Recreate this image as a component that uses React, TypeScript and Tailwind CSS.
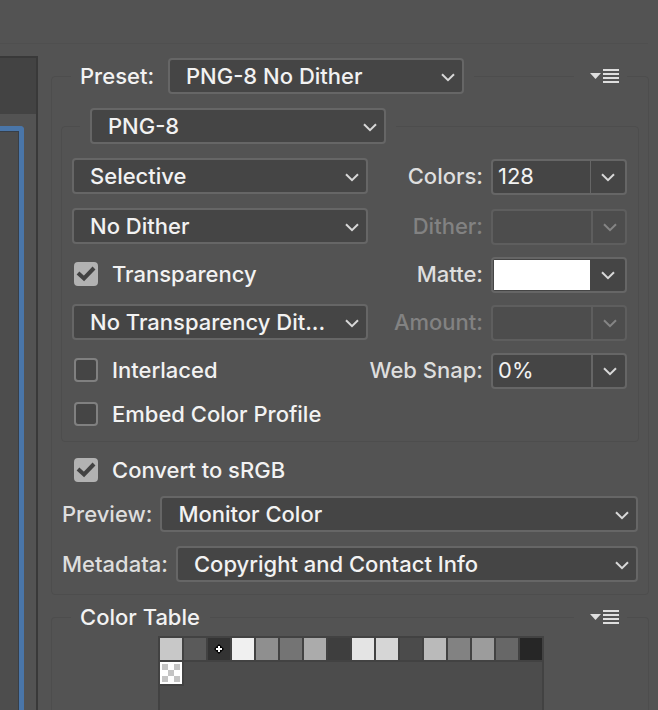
import React from "react";

const FONT = "font-['Inter','Liberation_Sans',sans-serif]";

function Chevron({ className = "" }: { className?: string }) {
  return (
    <svg viewBox="0 0 14 9" className={`h-[9px] w-[14px] shrink-0 ${className}`} fill="none" stroke="currentColor" strokeWidth="2" aria-hidden="true">
      <path d="M1 1.2 L7 7.2 L13 1.2" />
    </svg>
  );
}

function Select({ id, label, value, className = "" }: { id: string; label?: string; value: string; className?: string }) {
  return (
    <div className={`relative h-9 ${className}`}>
      <select
        id={id}
        aria-label={label}
        defaultValue={value}
        className="h-9 w-full appearance-none rounded-[4px] border-2 border-[#666666] bg-[#454545] pr-9 pl-4 text-[#f2f2f2] outline-none"
      >
        <option>{value}</option>
      </select>
      <Chevron className="pointer-events-none absolute top-[15px] right-[9px] text-[#d8d8d8]" />
    </div>
  );
}

function Check({ label, checked = false }: { label: string; checked?: boolean }) {
  return (
    <label className="flex h-9 items-center gap-3.5 pl-0.5 text-[#f2f2f2]">
      <span className="relative size-6">
        <input
          type="checkbox"
          defaultChecked={checked}
          className="peer block size-6 appearance-none rounded-[4px] border-2 border-[#808080] bg-[#454545] checked:border-[#b2b2b2] checked:bg-[#b2b2b2]"
        />
        <svg viewBox="0 0 24 24" className="pointer-events-none absolute inset-0 hidden size-6 text-[#424242] peer-checked:block" fill="none" stroke="currentColor" strokeWidth="4" aria-hidden="true">
          <path d="M4 11 L10 16.5 L20 6" />
        </svg>
      </span>
      {label}
    </label>
  );
}

type ComboProps = {
  id: string;
  label: string;
  value?: string;
  disabled?: boolean;
  swatch?: boolean;
  thin?: boolean;
  className?: string;
};

function Combo({ id, label, value = "", disabled = false, swatch = false, thin = false, className = "" }: ComboProps) {
  return (
    <div className={`flex h-9 items-center justify-end gap-2 ${className}`}>
      <label htmlFor={id} className={`pb-0.5 whitespace-nowrap ${disabled ? "text-[#828282]" : "text-[#dedede]"}`}>
        {label}
      </label>
      <div className={`flex h-9 w-[136px] rounded-[4px] border-2 ${disabled ? "border-[#5e5e5e] bg-[#4d4d4d]" : "border-[#666666] bg-[#454545]"}`}>
        {swatch ? (
          <button id={id} type="button" aria-label="Matte color" className="my-px ml-px min-w-0 flex-1 bg-white" />
        ) : (
          <input id={id} defaultValue={value} disabled={disabled} className="min-w-0 flex-1 bg-transparent pb-0.5 pl-[5px] font-normal text-[#f2f2f2] outline-none" />
        )}
        <button
          type="button"
          disabled={disabled}
          aria-label={`${label} options`}
          className={`flex items-center justify-center ${thin ? "w-[35px] border-l" : "w-[34px] border-l-2 pl-0.5"} ${swatch ? "border-[#454545]" : disabled ? "border-[#5e5e5e]" : "border-[#666666]"} ${disabled ? "text-[#858585]" : "text-[#d8d8d8]"}`}
        >
          <Chevron />
        </button>
      </div>
    </div>
  );
}

function MenuButton({ label }: { label: string }) {
  return (
    <button type="button" aria-label={label} className="bg-[#535353] pr-2 pl-4 text-[#dedede]">
      <svg viewBox="0 0 29 15" className="block h-[15px] w-[29px]" fill="currentColor" shapeRendering="crispEdges" aria-hidden="true">
        <path d="M0 4 H11 L5.5 10 Z" shapeRendering="auto" />
        <path d="M13 0 H29 V2 H13 Z M13 4 H29 V6 H13 Z M13 8 H29 V10 H13 Z M13 12 H29 V14 H13 Z" />
      </svg>
    </button>
  );
}

const SWATCHES = [
  "#c8c8c8", "#5a5a5a", "#333333", "#f0f0f0", "#8f8f8f", "#747474", "#ababab", "#3e3e3e",
  "#e4e4e4", "#d6d6d6", "#4b4b4b", "#bababa", "#828282", "#9c9c9c", "#676767", "#262626",
];

function ColorTable() {
  return (
    <div className="ml-[106px] flex w-[386px] flex-1 flex-col border-2 border-b-0 border-[#424242] bg-[#4c4c4c]">
      <div className="flex gap-0.5 bg-[#424242] pb-0.5">
        {SWATCHES.map((color, i) => (
          <button key={color} type="button" aria-label={color} className="flex size-[22px] items-center justify-center" style={{ backgroundColor: color }}>
            {i === 2 && (
              <svg viewBox="0 0 10 10" className="size-[10px]" aria-hidden="true">
                <path d="M5 0 L10 5 L5 10 L0 5 Z" fill="#000000" />
                <path d="M4 2 H6 V4 H8 V6 H6 V8 H4 V6 H2 V4 H4 Z" fill="#ffffff" />
              </svg>
            )}
          </button>
        ))}
      </div>
      <button type="button" aria-label="Transparent" className="size-6 border-r-2 border-b-2 border-[#424242] bg-white">
        <svg viewBox="0 0 22 22" className="block size-[22px]" fill="#c4c4c4" shapeRendering="crispEdges" aria-hidden="true">
          <path d="M2 2h6v6H2z M14 2h6v6h-6z M8 8h6v6H8z M2 14h6v6H2z M14 14h6v6h-6z" />
        </svg>
      </button>
    </div>
  );
}

function PreviewEdge() {
  return (
    <div className="flex w-[38px] shrink-0 flex-col border-t-2 border-r-2 border-[#393939]">
      <div className="h-14 bg-[#434343]" />
      <div className="mt-3 mr-3 flex-1 rounded-tr-[4px] border-t-[5px] border-r-[5px] border-[#4a76a9]">
        <div className="h-full border-t border-r border-[#383f48] bg-[#4d4d4d]" />
      </div>
    </div>
  );
}

export default function App() {
  return (
    <main className={`flex h-screen min-h-[710px] flex-col overflow-hidden bg-[#535353] text-[22px] leading-7 font-medium ${FONT}`}>
      <div className="mr-2.5 h-11 shrink-0 border-b border-[#4f4f4f]" />
      <div className="flex min-h-0 flex-1 pt-3">
        <PreviewEdge />
        <div className="flex min-w-0 flex-1 flex-col pt-5 pr-[9px] pl-[13px]">
          <section className="shrink-0 rounded-[4px] border border-[#4d4d4d] px-[9px] pb-3">
            <div className="-mt-[19px] flex items-center justify-between pr-3 pl-2.5">
              <div className="flex items-center bg-[#535353] pr-2.5">
                <label htmlFor="preset" className="w-[97px] pl-[9px] text-[#f2f2f2]">Preset:</label>
                <Select id="preset" value="PNG-8 No Dither" className="w-[296px]" />
              </div>
              <MenuButton label="Preset menu" />
            </div>

            <div className="mt-8 rounded-[4px] border border-[#4d4d4d] pr-[11px] pb-[9px] pl-2.5">
              <div className="-mt-[19px] ml-2 w-fit bg-[#535353] px-2.5">
                <Select id="format" label="File format" value="PNG-8" className="w-[296px]" />
              </div>
              <div className="mt-3.5 flex">
                <div className="min-w-0 flex-1">
                  <Select id="reduction" label="Color reduction" value="Selective" />
                  <Select id="dither-method" label="Dither method" value="No Dither" className="mt-3.5" />
                  <div className="mt-3"><Check label="Transparency" checked /></div>
                  <Select id="transparency-dither" label="Transparency dither" value="No Transparency Dit..." className="mt-3" />
                  <div className="mt-3"><Check label="Interlaced" /></div>
                  <div className="mt-2"><Check label="Embed Color Profile" /></div>
                </div>
                <div className="w-[259px] pt-px">
                  <Combo id="colors" label="Colors:" value="128" thin />
                  <Combo id="dither" label="Dither:" disabled className="mt-3.5" />
                  <Combo id="matte" label="Matte:" swatch thin className="mt-3" />
                  <Combo id="amount" label="Amount:" disabled className="mt-3" />
                  <Combo id="snap" label="Web Snap:" value="0%" className="mt-3" />
                </div>
              </div>
            </div>

            <div className="mt-2.5 pl-[11px]"><Check label="Convert to sRGB" checked /></div>
            <div className="mt-2 mr-px flex items-center gap-2 text-[#dedede]">
              <label htmlFor="preview" className="pl-px">Preview:</label>
              <Select id="preview" value="Monitor Color" className="min-w-0 flex-1" />
            </div>
            <div className="mt-3.5 mr-px flex items-center gap-2 text-[#dedede]">
              <label htmlFor="metadata" className="pl-px">Metadata:</label>
              <Select id="metadata" value="Copyright and Contact Info" className="min-w-0 flex-1" />
            </div>
          </section>

          <section className="mt-[22px] flex min-h-0 flex-1 flex-col rounded-t-[4px] border border-b-0 border-[#4d4d4d]">
            <div className="-mt-[19px] mb-px flex h-9 shrink-0 items-center justify-between pr-[21px] pl-[19px]">
              <h2 className="bg-[#535353] pr-2.5 pl-[9px] text-[#f2f2f2]">Color Table</h2>
              <MenuButton label="Color table menu" />
            </div>
            <ColorTable />
          </section>
        </div>
      </div>
    </main>
  );
}
